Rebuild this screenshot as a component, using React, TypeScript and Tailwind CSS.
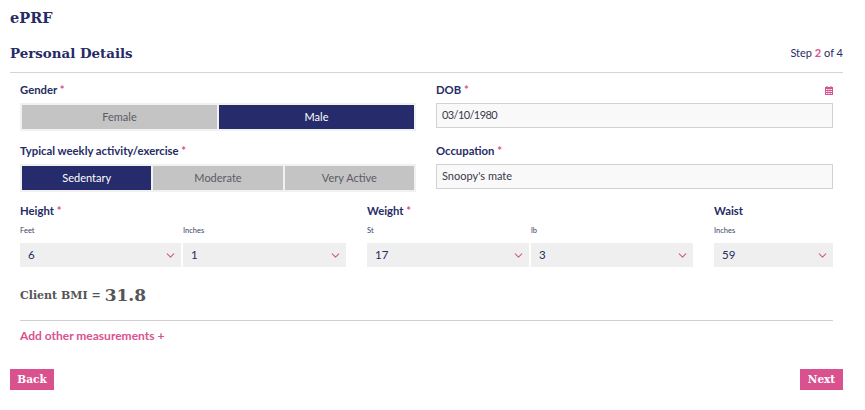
import {JSX} from 'react';
import {ChevronDown} from 'lucide-react';

const slab = "font-['DejaVu_Serif',serif]";

function Label({text, required}: {text: string; required?: boolean}): JSX.Element {
  return (
    <div className="h-[14px] text-[11.3px] leading-[14px] font-bold text-[#252b64]">
      {text}
      {required && <span className="text-[#d9528f]"> *</span>}
    </div>
  );
}

function Toggle({options, active}: {options: string[]; active: string}): JSX.Element {
  return (
    <div className="mt-[6px] flex h-[28px] gap-[2px] bg-[#f1f1f1] p-[2px]">
      {options.map(option => (
        <div
          key={option}
          className={
            option === active
              ? 'flex flex-1 items-center justify-center bg-[#252b6b] text-[11px] text-white'
              : 'flex flex-1 items-center justify-center bg-[#c4c4c4] text-[11px] text-[#5b5b66]'
          }
        >
          {option}
        </div>
      ))}
    </div>
  );
}

function TextField({value, tight}: {value: string; tight?: boolean}): JSX.Element {
  return (
    <div
      className={
        tight
          ? 'mt-[6px] flex h-[25px] items-center border border-[#d2d2d2] bg-[#f9f9f9] px-[5px] text-[11px] tracking-[-0.6px] text-[#3a3a4a]'
          : 'mt-[6px] flex h-[25px] items-center border border-[#d2d2d2] bg-[#f9f9f9] px-[5px] text-[11px] text-[#3a3a4a]'
      }
    >
      {value}
    </div>
  );
}

function Select({label, value, width}: {label: string; value: string; width: string}): JSX.Element {
  return (
    <div className={width}>
      <div className="h-[12px] text-[7.5px] leading-[12px] text-[#3a3f66]">{label}</div>
      <div className="mt-[6px] flex h-[24px] items-center justify-between bg-[#efefef] pr-[4px] pl-[8px] text-[11.5px] text-[#252b64]">
        {value}
        <ChevronDown size={13} strokeWidth={2} className="text-[#c9608f]" />
      </div>
    </div>
  );
}

export default function App(): JSX.Element {
  return (
    <div className="h-[410px] w-[865px] overflow-hidden bg-white pt-[8px] pr-[22px] pl-[10px] font-['Lato','Noto_Sans',sans-serif]">
      <h1 className={`h-[20px] text-[14.5px] leading-[20px] font-bold text-[#252b64] ${slab}`}>ePRF</h1>
      <div className="mt-[15px] flex h-[20px] items-center justify-between">
        <h2 className={`text-[13.4px] font-bold text-[#252b64] ${slab}`}>Personal Details</h2>
        <div className="text-[11px] text-[#252b64]">
          Step <span className="font-bold text-[#d9528f]">2</span> of 4
        </div>
      </div>
      <div className="mt-[9px] border-t border-[#d4d4d4]" />

      <div className="mt-[10px] px-[10px]">
        <div className="grid grid-cols-[396px_397px] gap-x-[20px]">
          <div>
            <Label text="Gender" required />
            <Toggle options={['Female', 'Male']} active="Male" />
          </div>
          <div>
            <div className="flex items-center justify-between">
              <Label text="DOB" required />
              <svg width="8" height="9" viewBox="0 0 8 9" className="text-[#d9528f]" fill="currentColor">
                <path d="M1.5 0h1v1h3V0h1v1H8v8H0V1h1.5zM1 3v1h1.5V3zm2.25 0v1h1.5V3zM5.5 3v1H7V3zM1 5v1h1.5V5zm2.25 0v1h1.5V5zM5.5 5v1H7V5zM1 7v1h1.5V7zm2.25 0v1h1.5V7zM5.5 7v1H7V7z" />
              </svg>
            </div>
            <TextField value="03/10/1980" tight />
          </div>
        </div>

        <div className="mt-[13px] grid grid-cols-[396px_397px] gap-x-[20px]">
          <div>
            <Label text="Typical weekly activity/exercise" required />
            <Toggle options={['Sedentary', 'Moderate', 'Very Active']} active="Sedentary" />
          </div>
          <div>
            <Label text="Occupation" required />
            <TextField value="Snoopy's mate" />
          </div>
        </div>

        <div className="mt-[12px] flex gap-[21px]">
          <div className="w-[326px]">
            <Label text="Height" required />
            <div className="mt-[7px] flex gap-[2px]">
              <Select label="Feet" value="6" width="w-[161px]" />
              <Select label="Inches" value="1" width="w-[163px]" />
            </div>
          </div>
          <div className="w-[326px]">
            <Label text="Weight" required />
            <div className="mt-[7px] flex gap-[2px]">
              <Select label="St" value="17" width="w-[162px]" />
              <Select label="lb" value="3" width="w-[162px]" />
            </div>
          </div>
          <div className="w-[119px]">
            <Label text="Waist" />
            <div className="mt-[7px]">
              <Select label="Inches" value="59" width="w-full" />
            </div>
          </div>
        </div>

        <div className={`mt-[15px] flex h-[28px] items-center gap-[4px] font-bold text-[#555555] ${slab}`}>
          <span className="text-[11px]">Client BMI =</span>
          <span className="text-[17px]">31.8</span>
        </div>
        <div className="mt-[10px] border-t border-[#cfcfcf]" />
        <div className="mt-[8px] text-[12px] leading-[14px] font-bold text-[#d9528f]">Add other measurements +</div>
      </div>

      <div className="mt-[26px] flex justify-between">
        <button className={`flex h-[21px] w-[44px] items-center justify-center bg-[#d9528f] text-[10.5px] font-bold text-white ${slab}`}>Back</button>
        <button className={`flex h-[21px] w-[43px] items-center justify-center bg-[#d9528f] text-[10.5px] font-bold text-white ${slab}`}>Next</button>
      </div>
    </div>
  );
}
